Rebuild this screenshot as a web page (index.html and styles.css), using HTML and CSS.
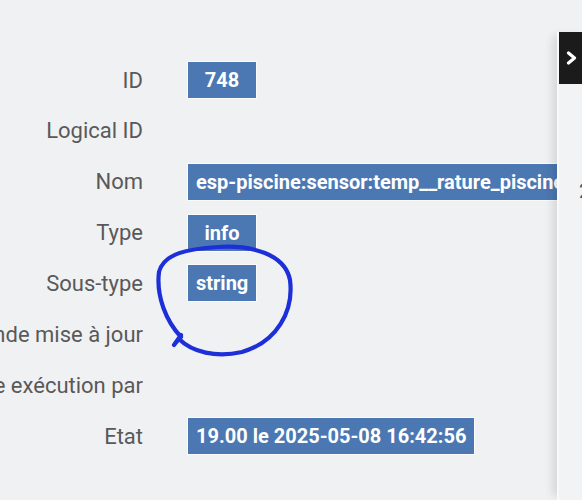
FILE: index.html
```html
<!DOCTYPE html>
<html>
<head>
<meta charset="utf-8">
<link rel="stylesheet" href="styles.css">
</head>
<body>
<div class="page">
  <main class="main">
    <div class="form">
      <div class="row"><div class="label">ID</div><div class="value"><span class="badge">748</span></div></div>
      <div class="row"><div class="label">Logical ID</div><div class="value"></div></div>
      <div class="row"><div class="label">Nom</div><div class="value"><span class="badge wide">esp-piscine:sensor:temp__rature_piscine</span></div></div>
      <div class="row"><div class="label">Type</div><div class="value"><span class="badge">info</span></div></div>
      <div class="row"><div class="label">Sous-type</div><div class="value"><span class="badge">string</span></div></div>
      <div class="row"><div class="label">Commande mise à jour</div><div class="value"></div></div>
      <div class="row"><div class="label">Dernière exécution par</div><div class="value"></div></div>
      <div class="row"><div class="label">Etat</div><div class="value"><span class="badge">19.00 le 2025-05-08 16:42:56</span></div></div>
    </div>
  </main>
  <aside class="side">
    <div class="toggle">
      <svg width="12" height="14" viewBox="0 0 12 14"><path d="M2.5 2 L8.5 7 L2.5 12" fill="none" stroke="#fff" stroke-width="3.2" stroke-linecap="round" stroke-linejoin="round"/></svg>
    </div>
    <div class="side-text">2</div>
  </aside>
</div>
<svg class="mark" width="582" height="500" viewBox="0 0 582 500">
  <path d="M181 337 C166 321 156 296 159 272 C164 253 188 249 218 247 C252 245 285 254 290 280 C294 311 277 342 242 352 C216 358 192 352 179 339 L174 345 L181 335" fill="none" stroke="#1c2fd9" stroke-width="4.2" stroke-linecap="round" stroke-linejoin="round"/>
</svg>
</body>
</html>
```
FILE: styles.css
```css
html, body {
  margin: 0;
  padding: 0;
  background: #f0f1f3;
  width: 582px;
  height: 500px;
  overflow: hidden;
  font-family: Roboto, "Liberation Sans", sans-serif;
}
.page {
  display: flex;
  width: 582px;
  height: 500px;
}
.main {
  width: 557px;
  flex: none;
  overflow: hidden;
}
.form {
  padding-top: 54.6px;
}
.row {
  display: flex;
  align-items: center;
  height: 50.86px;
}
.label {
  width: 143px;
  flex: none;
  display: flex;
  justify-content: flex-end;
  white-space: nowrap;
  color: #595959;
  font-size: 22px;
}
.value {
  margin-left: 45px;
  display: flex;
  white-space: nowrap;
}
.badge {
  display: inline-block;
  box-sizing: border-box;
  min-width: 68px;
  height: 36px;
  line-height: 36px;
  padding: 0 8px;
  text-align: center;
  background: #4b78b2;
  color: #fff;
  font-weight: 700;
  font-size: 20px;
  box-shadow: 0 0 0 1px rgba(255,255,255,0.7);
}
.side {
  flex: 1;
  margin-top: 32px;
  background: #f2f3f5;
  border-left: 2px solid #fafafa;
  box-shadow: -8px 0 10px -4px rgba(0,0,0,0.12);
  position: relative;
}
.toggle {
  height: 52px;
  background: #1b1b1b;
  display: flex;
  align-items: center;
  padding-left: 7px;
}
.side-text {
  margin-top: 95px;
  padding-left: 20px;
  color: #555;
  font-size: 20px;
}
.mark {
  position: absolute;
  left: 0;
  top: 0;
  pointer-events: none;
}
```
